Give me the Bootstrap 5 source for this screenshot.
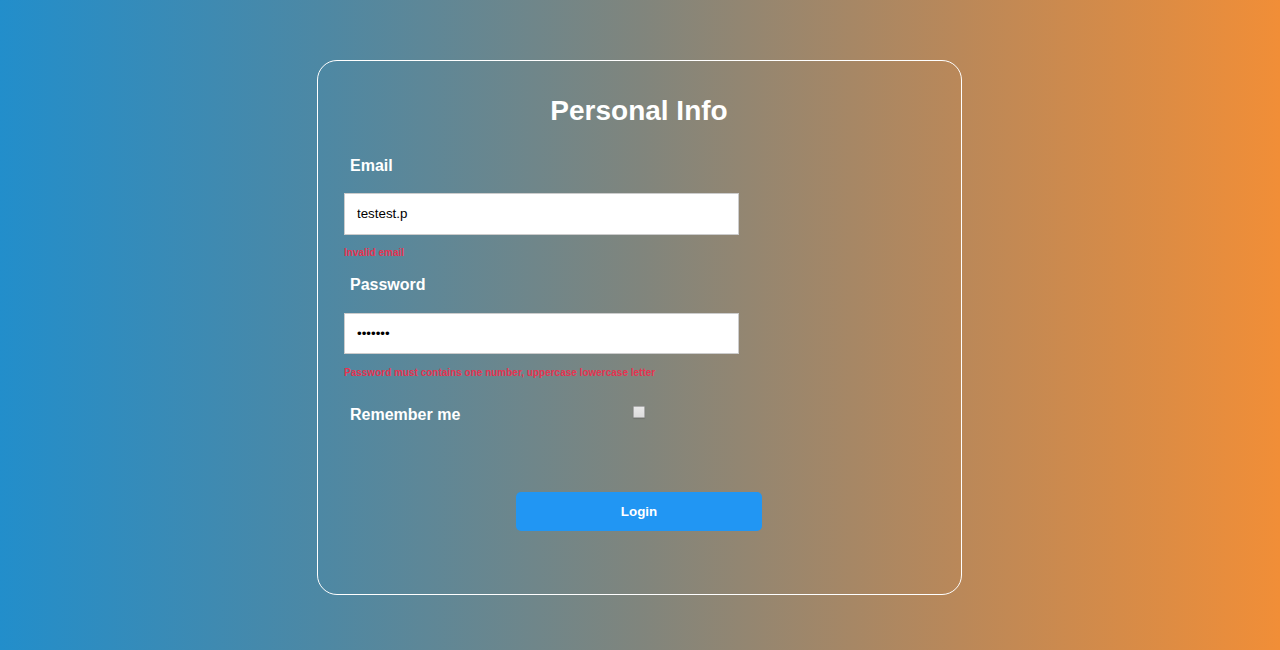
<!DOCTYPE html>
<html lang="en">
<head>
<meta charset="utf-8">
<meta name="viewport" content="width=device-width, initial-scale=1">
<title>Personal Info</title>
<link href="https://cdn.jsdelivr.net/npm/bootstrap@5.3.0/dist/css/bootstrap.min.css" rel="stylesheet">
<style>
body{min-height:100vh;font-family:"Liberation Sans",Arial,sans-serif;background:linear-gradient(to right,#228ecb,#4d88a4 25%,#80857d 50%,#ba8859 75%,#f18e37);color:#fff}
.login-panel{width:645px;height:535px;margin:60px 0 0 317px;padding:33px 27px 0 26px;border:1px solid #fff;border-radius:20px}
.panel-title{font-size:28px;line-height:34px;font-weight:700;margin:0 0 26px}
.field-label{font-size:16px;line-height:24px;font-weight:700;padding-left:6px;display:block}
.login-panel .form-control{width:395px;height:42px;padding:0 12px 1px;border:1px solid #ccc;border-radius:0;background:#fff;color:#000;font-size:13.333px;margin-top:15px}
.login-panel .pass-field{height:41px;padding-bottom:0;margin-top:16px}
.field-error{font-size:10px;line-height:12px;font-weight:700;color:#e53351;margin:12px 0 14px}
.pass-field + .field-error{margin-top:13px}
.remember-row{margin-top:24px;height:24px}
.remember-row .form-check-input{width:12px;height:12px;margin:3px 0 0 173px;border:1px solid #aaa;border-radius:1px;background:linear-gradient(#e8e8e8,#dcdcdc);box-shadow:0 1px 1px rgba(0,0,0,.12)}
.login-btn{width:246px;height:39px;margin-top:65px;padding:0;background:#2196f3;border:0;border-radius:5px;color:#fff;font-size:13.333px;font-weight:700}
</style>
</head>
<body>
<main class="login-panel">
<form novalidate>
<h1 class="panel-title text-center">Personal Info</h1>
<label class="field-label" for="email">Email</label>
<input class="form-control" id="email" type="email" value="testest.p">
<p class="field-error">Invalid email</p>
<label class="field-label" for="password">Password</label>
<input class="form-control pass-field" id="password" type="password" value="abcdefg">
<p class="field-error">Password must contains one number, uppercase lowercase letter</p>
<div class="remember-row d-flex align-items-start">
<label class="field-label" for="remember">Remember me</label>
<input class="form-check-input" id="remember" type="checkbox">
</div>
<button class="btn login-btn d-block mx-auto" type="button">Login</button>
</form>
</main>
<script src="https://cdn.jsdelivr.net/npm/bootstrap@5.3.0/dist/js/bootstrap.bundle.min.js"></script>
</body>
</html>
